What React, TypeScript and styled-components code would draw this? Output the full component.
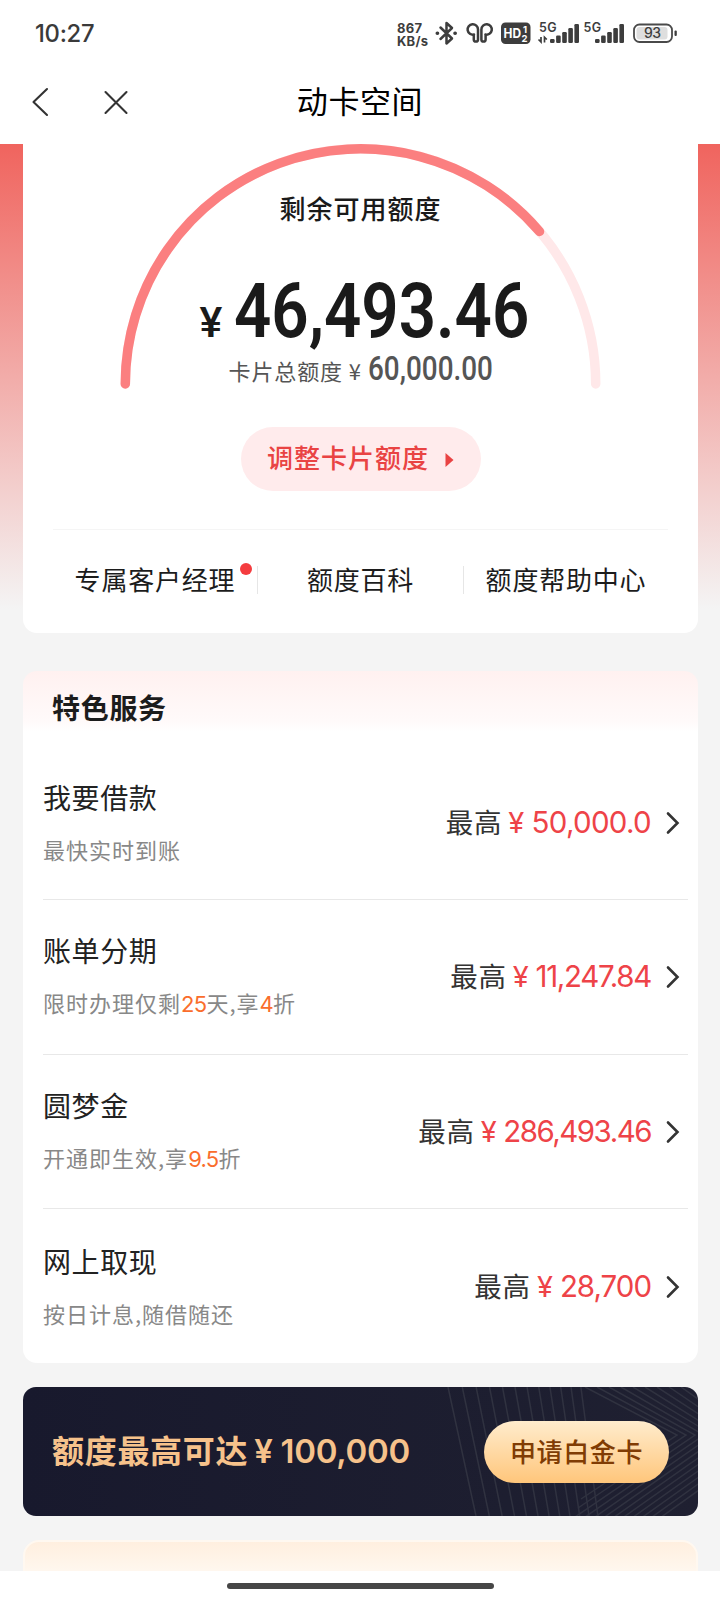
import React from "react";
import styled, { createGlobalStyle } from "styled-components";

const cjk = `"Noto Sans CJK SC", sans-serif`;

const GlobalStyle = createGlobalStyle`
  * { box-sizing: border-box; }
  body { margin: 0; background: #f4f4f4; font-family: ${cjk}; }
`;

const Screen = styled.div`
  width: 720px;
  height: 1600px;
  display: flex;
  flex-direction: column;
  overflow: hidden;
  background: #f4f4f4;
`;

const StatusBar = styled.header`
  flex: none;
  height: 66px;
  padding: 0 40px 0 35px;
  display: flex;
  align-items: center;
  justify-content: space-between;
  background: #fff;
`;

const Clock = styled.span`
  font: 500 23.8px/1 Inter, sans-serif;
  letter-spacing: -0.3px;
  margin-top: 2px;
  color: #3a3a3a;
`;

const StatusIcons = styled.svg`
  width: 290px;
  height: 36px;
  display: block;
`;

const NavBar = styled.nav`
  flex: none;
  height: 78px;
  padding: 0 27px 7px;
  display: grid;
  grid-template-columns: 120px 1fr 120px;
  align-items: center;
  background: #fff;
`;

const NavIcons = styled.svg`
  width: 120px;
  height: 40px;
`;

const PageTitle = styled.h1`
  margin: 0;
  padding-bottom: 4px;
  text-align: center;
  font-size: 31px;
  font-weight: 400;
  line-height: 38px;
  letter-spacing: 0.6px;
  color: #000;
`;

const Content = styled.main`
  flex: none;
  height: 1427px;
  overflow: hidden;
  padding: 0 22px 0 23px;
  background: linear-gradient(#f0645e 0, #f4f4f4 465px);
`;

const LimitCard = styled.section`
  height: 489px;
  padding: 0 30px;
  display: flex;
  flex-direction: column;
  align-items: center;
  background: #fff;
  border-radius: 0 0 14px 14px;
`;

const Gauge = styled.div`
  width: 490px;
  height: 283px;
  display: grid;
  flex: none;
  > * { grid-area: 1 / 1; }
`;

const GaugeArc = styled.svg`
  width: 490px;
  height: 250px;
`;

const GaugeText = styled.div`
  display: flex;
  flex-direction: column;
  align-items: center;
`;

const GaugeLabel = styled.div`
  margin-top: 44px;
  font-size: 26px;
  line-height: 40px;
  font-weight: 500;
  letter-spacing: 1px;
  color: #1a1a1a;
`;

const Available = styled.div`
  margin-top: 45px;
  height: 76px;
  display: flex;
  align-items: baseline;
  color: #1a1a1a;
  white-space: nowrap;
  width: 322px;
`;

const Currency = styled.span`
  flex: none;
  width: 34px;
  font: 500 43px/76px Roboto, sans-serif;
`;

const BigAmount = styled.span`
  font: 600 76px/76px Roboto, sans-serif;
  transform: scaleX(0.86);
  transform-origin: left;
  width: 288px;
`;

const Total = styled.div`
  margin-top: 2px;
  display: flex;
  align-items: baseline;
  height: 36px;
  font-size: 22px;
  line-height: 36px;
  letter-spacing: 0.9px;
  color: #555;
  white-space: nowrap;
  width: 264px;
`;

const TotalAmount = styled.span`
  margin-left: 6px;
  font: 500 33px/36px Roboto, sans-serif;
  letter-spacing: 0;
  transform: scaleX(0.845);
  transform-origin: left;
  width: 125px;
`;

const AdjustButton = styled.button`
  flex: none;
  width: 240px;
  height: 64px;
  padding: 0 0 4px 0;
  border: 0;
  border-radius: 32px;
  display: flex;
  align-items: center;
  justify-content: center;
  gap: 16px;
  background: #ffebec;
  color: #e94343;
  font: 500 26px/40px ${cjk};
  letter-spacing: 1px;
  svg { margin-top: 6px; }
`;

const Links = styled.div`
  margin-top: 38px;
  width: 615px;
  flex: 1;
  border-top: 1px solid #f5f5f5;
  display: grid;
  grid-template-columns: 205px 206px 204px;
  align-content: start;
  padding-top: 36px;
`;

const LinkItem = styled.a<{ $divided?: boolean }>`
  position: relative;
  height: 28px;
  padding-bottom: 3px;
  display: flex;
  align-items: center;
  justify-content: center;
  font-size: 26px;
  letter-spacing: 0.8px;
  white-space: nowrap;
  color: #1c1c1c;
  border-right: ${(p) => (p.$divided ? "1px solid #e6e6e6" : "0")};
`;

const Dot = styled.i`
  position: absolute;
  top: -3px;
  right: 5px;
  width: 12px;
  height: 12px;
  border-radius: 50%;
  background: #f43c3f;
`;

const ServiceCard = styled.section`
  margin-top: 38px;
  height: 692px;
  border-radius: 14px;
  background: linear-gradient(#fff1f0 0, #fffafa 50px, #fff 60px);
`;

const ServiceTitle = styled.h2`
  margin: 0;
  padding: 16px 29px 0;
  height: 74.4px;
  font-size: 28px;
  line-height: 40px;
  font-weight: 700;
  letter-spacing: 0.7px;
  color: #1c1c1c;
`;

const ServiceRow = styled.a`
  margin: 0 10px 0 20px;
  height: 154.7px;
  padding-right: 7px;
  border-bottom: 1px solid #e8e8e8;
  display: flex;
  align-items: center;
  &:last-child { border-color: transparent; }
`;

const RowText = styled.div`
  flex: 1;
  padding-bottom: 1px;
`;

const RowName = styled.div`
  font-size: 28px;
  line-height: 42px;
  letter-spacing: 0.6px;
  color: #222;
`;

const RowHint = styled.div`
  margin-top: 12px;
  font-size: 22px;
  line-height: 38px;
  letter-spacing: 1px;
  color: #888;
`;

const Accent = styled.em`
  font-style: normal;
  font-family: Inter, ${cjk};
  letter-spacing: -0.7px;
  color: #fa6d2c;
`;

const RowLimit = styled.div`
  display: flex;
  align-items: baseline;
  padding-bottom: 1px;
  font-size: 27.5px;
  line-height: 40px;
  letter-spacing: 0.8px;
  color: #333;
`;

const RowAmount = styled.span<{ $tracking: number }>`
  margin-left: 6px;
  font: 400 29.5px/40px Inter, sans-serif;
  letter-spacing: ${(p) => p.$tracking}px;
  color: #ee4348;
`;

const Yen = styled.span`
  font-size: 29px;
  margin-right: 8px;
`;

const Chevron = styled.svg`
  width: 16px;
  height: 24px;
  margin: 1px 0 0 14px;
`;

const Banner = styled.section`
  margin-top: 24px;
  height: 129px;
  border-radius: 13px;
  overflow: hidden;
  display: grid;
  background: linear-gradient(90deg, #18192d, #1f2031);
  > * { grid-area: 1 / 1; }
`;

const BannerArt = styled.svg`
  width: 675px;
  height: 129px;
`;

const BannerBody = styled.div`
  z-index: 1;
  padding: 0 29px;
  display: flex;
  align-items: center;
  justify-content: space-between;
`;

const BannerText = styled.div`
  margin-top: -3px;
  font-size: 32px;
  line-height: 44px;
  font-weight: 700;
  letter-spacing: 0.7px;
  white-space: nowrap;
  color: #f6c28b;
`;

const BannerAmount = styled.span`
  margin-left: 6px;
  font: 600 33px/44px Inter, sans-serif;
  letter-spacing: -0.3px;
`;

const ApplyButton = styled.button`
  width: 185px;
  height: 62px;
  padding: 0 0 2px;
  border: 0;
  border-radius: 31px;
  background: linear-gradient(#ffeccd, #ffc67b);
  color: #803c04;
  font: 500 26px/40px ${cjk};
  letter-spacing: 0.6px;
  white-space: nowrap;
`;

const NextCard = styled.section`
  margin-top: 24px;
  height: 60px;
  border: 2px solid #fff8f0;
  border-radius: 16px 16px 0 0;
  background: linear-gradient(#ffefdf, #fff8f0 32px);
`;

const HomeBar = styled.footer`
  flex: 1;
  display: flex;
  justify-content: center;
  padding-top: 12px;
  background: #fff;
  &::after {
    content: "";
    width: 267px;
    height: 6px;
    border-radius: 3px;
    background: #464646;
  }
`;

const services = [
  { name: "我要借款", hint: ["最快实时到账"], amount: "50,000.0", tracking: -0.7 },
  { name: "账单分期", hint: ["限时办理仅剩", "25", "天,享", "4", "折"], amount: "11,247.84", tracking: -1.3 },
  { name: "圆梦金", hint: ["开通即生效,享", "9.5", "折"], amount: "286,493.46", tracking: -1.5 },
  { name: "网上取现", hint: ["按日计息,随借随还"], amount: "28,700", tracking: -1 },
];

function Signal({ x }: { x: number }) {
  return (
    <g>
      {[4, 7.5, 11, 15, 19].map((h, i) => (
        <rect key={i} x={x + i * 6.1} y={43 - h} width="4.6" height={h} rx="1.2" />
      ))}
    </g>
  );
}

function StatusSymbols() {
  const bud = "M474 34.5A5.2 5.2 0 1 1 478 29.4V39.5A2.1 2.1 0 0 1 473.8 39.5V34.5";
  return (
    <StatusIcons viewBox="390 15 290 36" fontFamily="Inter, sans-serif" fill="#3d3d3d">
      <g fontWeight="700" fontSize="13">
        <text x="397" y="33" textLength="25">867</text>
        <text x="397" y="46" textLength="31">KB/s</text>
      </g>
      <g fill="none" stroke="#3d3d3d" strokeWidth="2.5" strokeLinejoin="round" strokeLinecap="round">
        <path d="M440.5 27.5L452 38.5L446.5 43.5V23L452 28L440.5 39" />
        <path d="M437.3 33.3h.2M455 33.3h.2" strokeWidth="3.6" />
        <path d={bud} />
        <path d={bud} transform="translate(959.4 0) scale(-1 1)" />
      </g>
      <rect x="501" y="22.5" width="29.5" height="21.5" rx="4.5" />
      <g fill="#fff" fontWeight="700">
        <text x="503.5" y="38.3" fontSize="13" textLength="17.5" lengthAdjust="spacingAndGlyphs">HD</text>
        <text x="523" y="32.5" fontSize="9.5">1</text>
        <text x="521.5" y="42" fontSize="9.5">2</text>
      </g>
      <g fontWeight="600" fontSize="12.5">
        <text x="539" y="32" textLength="17.5">5G</text>
        <text x="583.5" y="32" textLength="17.5">5G</text>
      </g>
      <path d="M538.5 39.5l2.5 2.5V37M544.5 42.5V37.2l2.3 2.3" fill="none" stroke="#3d3d3d" strokeWidth="1.7" />
      <Signal x={550} />
      <Signal x={595} />
      <rect x="634" y="24.5" width="38" height="17.5" rx="5.5" fill="#fff" stroke="#4a4a4a" strokeWidth="1.8" />
      <rect x="636.5" y="27" width="31" height="12.5" rx="3" fill="#dedede" />
      <rect x="674.5" y="30.5" width="2.3" height="5.5" rx="1" />
      <text x="644" y="38.3" fontSize="14" fontWeight="500" textLength="17">93</text>
    </StatusIcons>
  );
}

function BannerPattern() {
  return (
    <BannerArt viewBox="0 0 675 129" fill="none" stroke="#303240" strokeWidth="1.5">
      {Array.from({ length: 12 }, (_, i) => {
        const top = 425 + 14.5 * i - 0.22 * i * i;
        return <path key={i} d={`M${top} 0L${top + 28 - i} 129`} />;
      })}
      {Array.from({ length: 12 }, (_, i) => (
        <path key={i} d={`M${562 + i * 12} 0L${654 + i * 9} 48L${558 - i * 3} ${112 + i * 9}`} />
      ))}
    </BannerArt>
  );
}

export default function App() {
  return (
    <Screen>
      <GlobalStyle />
      <StatusBar>
        <Clock>10:27</Clock>
        <StatusSymbols />
      </StatusBar>
      <NavBar>
        <NavIcons viewBox="27 82 120 40" fill="none" stroke="#333" strokeWidth="2.1" strokeLinecap="round" strokeLinejoin="round">
          <path d="M47 89L33.5 102L47 115M105.5 92L126.5 113M126.5 92L105.5 113" />
        </NavIcons>
        <PageTitle>动卡空间</PageTitle>
      </NavBar>
      <Content>
        <LimitCard>
          <Gauge>
            <GaugeArc viewBox="116 144 490 250" fill="none" strokeWidth="9.5" strokeLinecap="round">
              <path d="M125.3 384A235.2 235.2 0 0 1 595.7 384" stroke="#ffe8e9" />
              <path d="M125.3 384A235.2 235.2 0 0 1 539.5 231.5" stroke="#fb7f80" />
            </GaugeArc>
            <GaugeText>
              <GaugeLabel>剩余可用额度</GaugeLabel>
              <Available>
                <Currency>¥</Currency>
                <BigAmount>46,493.46</BigAmount>
              </Available>
              <Total>
                卡片总额度 ¥<TotalAmount>60,000.00</TotalAmount>
              </Total>
            </GaugeText>
          </Gauge>
          <AdjustButton>
            调整卡片额度
            <svg width="9" height="16" viewBox="0 0 9 16">
              <path d="M0.5 1L8.5 8L0.5 15Z" fill="#e94343" />
            </svg>
          </AdjustButton>
          <Links>
            <LinkItem $divided>
              专属客户经理
              <Dot />
            </LinkItem>
            <LinkItem $divided>额度百科</LinkItem>
            <LinkItem>额度帮助中心</LinkItem>
          </Links>
        </LimitCard>
        <ServiceCard>
          <ServiceTitle>特色服务</ServiceTitle>
          {services.map((s) => (
            <ServiceRow key={s.name}>
              <RowText>
                <RowName>{s.name}</RowName>
                <RowHint>
                  {s.hint.map((part, i) => (i % 2 ? <Accent key={i}>{part}</Accent> : part))}
                </RowHint>
              </RowText>
              <RowLimit>
                最高
                <RowAmount $tracking={s.tracking}>
                  <Yen>¥</Yen>
                  {s.amount}
                </RowAmount>
              </RowLimit>
              <Chevron viewBox="0 0 16 24" fill="none" stroke="#333" strokeWidth="2.6" strokeLinecap="round">
                <path d="M3 2.5L12.5 12L3 21.5" />
              </Chevron>
            </ServiceRow>
          ))}
        </ServiceCard>
        <Banner>
          <BannerPattern />
          <BannerBody>
            <BannerText>
              额度最高可达
              <BannerAmount>¥ 100,000</BannerAmount>
            </BannerText>
            <ApplyButton>申请白金卡</ApplyButton>
          </BannerBody>
        </Banner>
        <NextCard />
      </Content>
      <HomeBar />
    </Screen>
  );
}
